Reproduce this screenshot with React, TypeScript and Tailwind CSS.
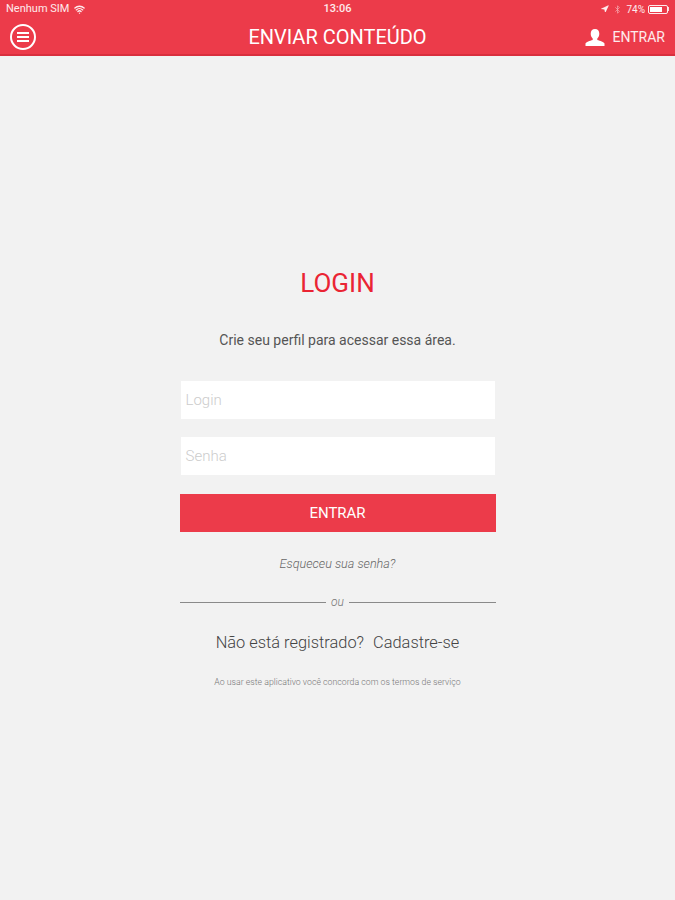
import { Navigation, Bluetooth, Wifi } from "lucide-react";

const FONT = "font-['Roboto','Liberation_Sans',sans-serif]";

function StatusBar() {
  return (
    <div className="grid h-[18px] grid-cols-3 items-center px-[6px] text-[11px] text-white/90">
      <div className="flex items-center gap-[5px]">
        <span>Nenhum SIM</span>
        <Wifi size={11} strokeWidth={3} />
      </div>
      <div className="text-center font-medium">13:06</div>
      <div className="flex items-center justify-end gap-[3px] text-[10px]">
        <Navigation size={8} fill="currentColor" />
        <Bluetooth size={9} className="mx-[1px] opacity-60" />
        <span>74%</span>
        <div className="flex items-center">
          <div className="h-[9px] w-[20px] rounded-[2px] border border-white/90 p-[1px]">
            <div className="h-full w-[74%] bg-white" />
          </div>
          <div className="h-[4px] w-[1px] bg-white/80" />
        </div>
      </div>
    </div>
  );
}

function NavBar() {
  return (
    <div className="grid h-[36px] grid-cols-[1fr_auto_1fr] items-center px-[10px] pt-[2px]">
      <button className="flex h-[26px] w-[26px] items-center justify-center rounded-full border-2 border-white">
        <svg width="14" height="12" viewBox="0 0 14 12" fill="none" stroke="white" strokeWidth="2">
          <path d="M1 2h12M1 6h12M1 10h12" />
        </svg>
      </button>
      <div className="text-[20px] leading-none text-white">ENVIAR CONTEÚDO</div>
      <div className="flex items-center justify-end gap-[8px] text-[14px] text-white/90">
        <svg width="20" height="17" viewBox="0 0 20 17" fill="white">
          <path d="M10 0c2.800 0 4.300 2 4.300 4.800 0 2-.8 3.700-2 4.800v1.300c2.800.8 6.700 2 7.200 3.600v2.500H.5v-2.500c.5-1.600 4.400-2.800 7.200-3.600V9.600c-1.200-1.100-2-2.800-2-4.800C5.700 2 7.200 0 10 0z" />
        </svg>
        <span>ENTRAR</span>
      </div>
    </div>
  );
}

export default function App() {
  return (
    <div className={`${FONT} flex min-h-[900px] flex-col bg-[#f2f2f2]`}>
      <header className="h-[56px] border-b-2 border-[#d92f3e] bg-[#ec3b4a]">
        <StatusBar />
        <NavBar />
      </header>

      <main className="mx-auto flex w-[316px] flex-col items-center pt-[211px]">
        <h1 className="text-[26px] leading-[32px] text-[#ea2433]">LOGIN</h1>
        <p className="mt-[31px] text-[14px] leading-[20px] text-[#555555]">
          Crie seu perfil para acessar essa área.
        </p>

        <div className="mt-[31px] flex h-[38px] w-[314px] items-center bg-white px-[5px] text-[15px] font-light text-[#cccccc]">
          Login
        </div>
        <div className="mt-[18px] flex h-[38px] w-[314px] items-center bg-white px-[5px] text-[15px] font-light text-[#cccccc]">
          Senha
        </div>

        <button className="mt-[19px] h-[38px] w-full bg-[#ec3b4a] text-[15px] text-white">
          ENTRAR
        </button>

        <div className="mt-[24px] text-[12.600px] leading-[16px] font-light text-[#666666] italic">
          Esqueceu sua senha?
        </div>

        <div className="mt-[22px] flex w-full items-center gap-[4px] text-[12px] leading-[16px] font-light text-[#777777] italic">
          <div className="h-px flex-1 bg-[#8a8a8a]" />
          <span className="px-[1px]">ou</span>
          <div className="h-px flex-1 bg-[#8a8a8a]" />
        </div>

        <div className="mt-[23px] flex gap-[9px] text-[16.400px] leading-[20px] font-light text-[#444444]">
          <span>Não está registrado?</span>
          <span>Cadastre-se</span>
        </div>

        <div className="mt-[23px] text-[8.750px] leading-[12px] font-light text-[#777777]">
          Ao usar este aplicativo você concorda com os termos de serviço
        </div>
      </main>
    </div>
  );
}
